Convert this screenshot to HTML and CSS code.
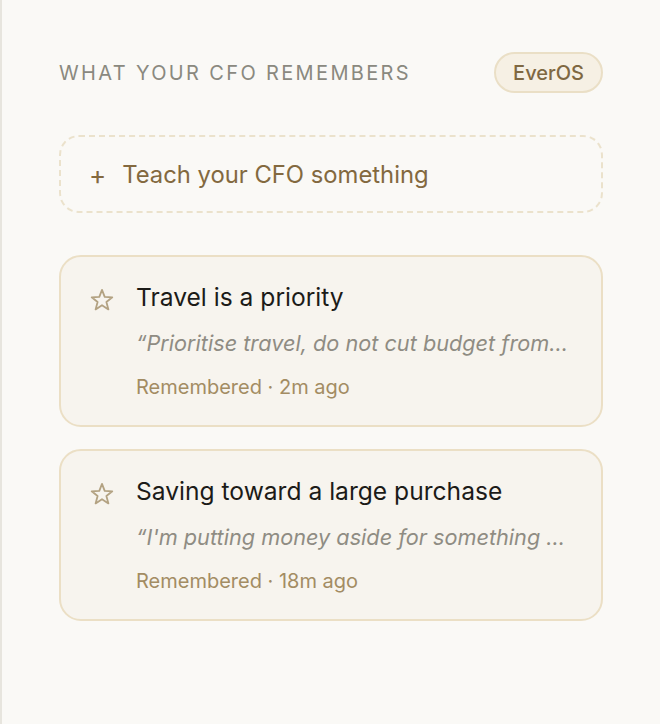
FILE: index.html
```html
<!DOCTYPE html>
<html>
<head>
<meta charset="utf-8">
<link rel="stylesheet" href="styles.css">
</head>
<body>
<aside class="panel">
  <header class="head">
    <h2 class="title">WHAT YOUR CFO REMEMBERS</h2>
    <span class="badge">EverOS</span>
  </header>
  <button class="teach"><span class="plus">+</span><span>Teach your CFO something</span></button>
  <ul class="list">
    <li class="card">
      <svg class="star" viewBox="0 0 24 24" width="24" height="24"><path d="M12 1.9L14.7 8.9 22.3 9.3 16.4 14 18.4 21.4 12 17.2 5.6 21.4 7.6 14 1.7 9.3 9.3 8.9Z" fill="none" stroke="currentColor" stroke-width="1.8" stroke-linejoin="round"/></svg>
      <div class="body">
        <div class="name">Travel is a priority</div>
        <div class="quote">“Prioritise travel, do not cut budget from…</div>
        <div class="meta">Remembered · 2m ago</div>
      </div>
    </li>
    <li class="card">
      <svg class="star" viewBox="0 0 24 24" width="24" height="24"><path d="M12 1.9L14.7 8.9 22.3 9.3 16.4 14 18.4 21.4 12 17.2 5.6 21.4 7.6 14 1.7 9.3 9.3 8.9Z" fill="none" stroke="currentColor" stroke-width="1.8" stroke-linejoin="round"/></svg>
      <div class="body">
        <div class="name">Saving toward a large purchase</div>
        <div class="quote">“I'm putting money aside for something …</div>
        <div class="meta">Remembered · 18m ago</div>
      </div>
    </li>
  </ul>
</aside>
</body>
</html>
```
FILE: styles.css
```css
html, body { margin: 0; padding: 0; }
body {
  background: #faf9f6;
  font-family: Inter, "Noto Sans", sans-serif;
  width: 660px;
  height: 724px;
  overflow: hidden;
}
.panel {
  box-sizing: border-box;
  height: 724px;
  border-left: 2px solid #e7e5de;
  padding: 52px 57px 0 57px;
}
.head {
  display: flex;
  align-items: center;
  justify-content: space-between;
  height: 41px;
}
.title {
  margin: 0;
  font-size: 20px;
  font-weight: 400;
  letter-spacing: 2.35px;
  color: #8a897f;
}
.badge {
  box-sizing: border-box;
  height: 41px;
  padding: 0 17px;
  display: flex;
  align-items: center;
  border: 2px solid #eadfc6;
  border-radius: 21px;
  background: #f6f0e4;
  color: #7f6842;
  font-size: 20px;
  font-weight: 500;
}
.teach {
  box-sizing: border-box;
  margin-top: 42px;
  width: 100%;
  height: 78px;
  display: flex;
  align-items: center;
  gap: 16px;
  padding: 0 28px;
  background: transparent;
  border: 2px dashed #ebe2cc;
  border-radius: 20px;
  font-family: inherit;
  font-size: 23.8px;
  color: #83693f;
  text-align: left;
}
.plus { font-size: 26px; font-weight: 400; }
.list {
  list-style: none;
  margin: 42px 0 0 0;
  padding: 0;
  display: flex;
  flex-direction: column;
  gap: 22px;
}
.card {
  box-sizing: border-box;
  height: 172px;
  display: flex;
  gap: 22px;
  padding: 25px 30px 0 29px;
  background: #f7f4ee;
  border: 2px solid #ebdfc5;
  border-radius: 22px;
}
.star { flex: none; color: #b3a282; margin-top: 6px; }
.body { min-width: 0; flex: 1; }
.name {
  font-size: 24.6px;
  line-height: 30px;
  color: #1c1b18;
}
.quote {
  margin-top: 17px;
  font-size: 21.7px;
  line-height: 28px;
  font-style: italic;
  color: #8f8c83;
  white-space: nowrap;
}
.meta {
  margin-top: 17px;
  font-size: 20px;
  line-height: 26px;
  color: #a38c63;
}
```
